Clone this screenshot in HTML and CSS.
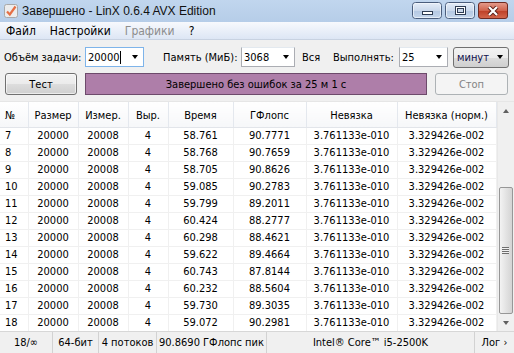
FILE: index.html
```html
<!DOCTYPE html>
<html lang="ru">
<head>
    <meta charset="UTF-8">
    <title>LinX</title>
    <link rel="stylesheet" href="styles.css">
</head>
<body>
<div id="window">
    <div class="titlebar">
        <svg class="app-icon" width="16" height="16" viewBox="0 0 16 16">
            <rect x="1.5" y="1.5" width="13" height="13" rx="2" fill="#ececec" stroke="#a9a9a9"/>
            <path d="M4 8.5 L6.8 11.5 L12.5 3.5" fill="none" stroke="#e56f45" stroke-width="2.2"/>
        </svg>
        <span class="title">Завершено - LinX 0.6.4 AVX Edition</span>
        <div class="caption-btns">
            <svg width="30" height="17" viewBox="0 0 30 17">
                <defs>
                    <linearGradient id="gBlue" x1="0" y1="0" x2="0" y2="1">
                        <stop offset="0" stop-color="#e6eef8"/>
                        <stop offset="0.5" stop-color="#cbd9ec"/>
                        <stop offset="0.51" stop-color="#b4c8e2"/>
                        <stop offset="1" stop-color="#c6d7ec"/>
                    </linearGradient>
                </defs>
                <rect x="0.5" y="0.5" width="29" height="16" rx="3" fill="url(#gBlue)" stroke="#4a5d7c"/>
                <rect x="1.5" y="1.5" width="27" height="14" rx="2" fill="none" stroke="#f4f8fc" stroke-opacity="0.7"/>
                <rect x="10.5" y="9.5" width="10" height="3" fill="#fff" stroke="#2e3c52"/>
            </svg>
            <svg width="30" height="17" viewBox="0 0 30 17">
                <rect x="0.5" y="0.5" width="29" height="16" rx="3" fill="url(#gBlue)" stroke="#4a5d7c"/>
                <rect x="1.5" y="1.5" width="27" height="14" rx="2" fill="none" stroke="#f4f8fc" stroke-opacity="0.7"/>
                <rect x="10.5" y="4.5" width="10" height="8" fill="#fff" stroke="#2e3c52"/>
                <rect x="12.5" y="6.5" width="6" height="4" fill="#c8d6e8" stroke="#2e3c52"/>
            </svg>
            <div class="cap-close">
                <svg width="14" height="10" viewBox="0 0 14 10">
                    <path d="M3 1 L11 9 M11 1 L3 9" stroke="#5a1f18" stroke-width="4"/>
                    <path d="M3 1 L11 9 M11 1 L3 9" stroke="#fff" stroke-width="2.2"/>
                </svg>
            </div>
        </div>
    </div>

    <div class="menubar">
        <span class="menu-item">Файл</span>
        <span class="menu-item">Настройки</span>
        <span class="menu-item disabled">Графики</span>
        <span class="menu-item">?</span>
    </div>

    <div class="controls">
        <label class="lbl lbl-size">Объём задачи:</label>
        <div class="combo combo-size focused"><span class="val">20000<span class="caret"></span></span><span class="arrow"></span></div>
        <label class="lbl lbl-mem">Память (МиБ):</label>
        <div class="combo combo-mem"><span class="val">3068</span><span class="arrow"></span></div>
        <label class="lbl lbl-all">Вся</label>
        <label class="lbl lbl-run">Выполнять:</label>
        <div class="combo combo-run"><span class="val">25</span><span class="arrow"></span></div>
        <div class="dropbtn"><span class="val">минут</span><span class="arrow"></span></div>
    </div>

    <div class="actions">
        <div class="btn btn-test">Тест</div>
        <div class="progress">Завершено без ошибок за 25 м 1 с</div>
        <div class="btn btn-stop disabled">Стоп</div>
    </div>

    <div class="list">
        <table class="grid">
            <thead>
                <tr>
                    <th class="c-num">№</th>
                    <th class="c-size">Размер</th>
                    <th class="c-dim">Измер.</th>
                    <th class="c-align">Выр.</th>
                    <th class="c-time">Время</th>
                    <th class="c-gf">ГФлопс</th>
                    <th class="c-res">Невязка</th>
                    <th class="c-norm">Невязка (норм.)</th>
                </tr>
            </thead>
            <tbody id="rows"></tbody>
        </table>
        <div class="vscroll">
            <div class="sb-arrow"><span class="tri-up"></span></div>
            <div class="sb-track">
                <div class="sb-thumb"><span class="grip"></span></div>
            </div>
            <div class="sb-arrow"><span class="tri-down"></span></div>
        </div>
    </div>

    <div class="statusbar">
        <span class="sb-cell s1">18/∞</span>
        <span class="sb-cell s2">64-бит</span>
        <span class="sb-cell s3">4 потоков</span>
        <span class="sb-cell s4">90.8690 ГФлопс пик</span>
        <span class="sb-cell s5">Intel® Core™ i5-2500K</span>
        <span class="sb-cell s6">Лог ›</span>
    </div>
</div>

<script>
    var results = [
        [7, "58.761", "90.7771"],
        [8, "58.768", "90.7659"],
        [9, "58.705", "90.8626"],
        [10, "59.085", "90.2783"],
        [11, "59.799", "89.2011"],
        [12, "60.424", "88.2777"],
        [13, "60.298", "88.4621"],
        [14, "59.622", "89.4664"],
        [15, "60.743", "87.8144"],
        [16, "60.232", "88.5604"],
        [17, "59.730", "89.3035"],
        [18, "59.072", "90.2981"]
    ];
    var tbody = document.getElementById("rows");
    results.forEach(function (r) {
        var tr = document.createElement("tr");
        tr.innerHTML =
            '<td class="c-num">' + r[0] + '</td>' +
            '<td>20000</td><td>20008</td><td>4</td>' +
            '<td>' + r[1] + '</td><td>' + r[2] + '</td>' +
            '<td>3.761133e-010</td><td>3.329426e-002</td>';
        tbody.appendChild(tr);
    });
</script>
</body>
</html>
```

FILE: styles.css
```css
*{
    margin: 0;
    padding: 0;
    box-sizing: border-box;
}
body{
    width: 514px;
    height: 353px;
    overflow: hidden;
    background: #f0f0f0;
    font-family: "DejaVu Sans Condensed", "DejaVu Sans", sans-serif;
    font-stretch: condensed;
    font-size: 11px;
    color: #000;
}
#window{
    width: 514px;
    height: 353px;
    display: flex;
    flex-direction: column;
    background: #f0f0f0;
}

/* title bar */
.titlebar{
    width: 514px;
    height: 22px;
    flex-shrink: 0;
    display: flex;
    align-items: center;
    background: linear-gradient(#c1d6ee, #b6cde8);
    padding-left: 3px;
}
.app-icon{
    margin-right: 3px;
    flex-shrink: 0;
}
.title{
    flex: 1;
    font-family: "Liberation Sans", sans-serif;
    font-stretch: normal;
    font-size: 12px;
    color: #111;
    white-space: nowrap;
}
.caption-btns{
    width: 99px;
    height: 17px;
    margin-right: 3px;
    align-self: flex-start;
    margin-top: 2px;
    flex-shrink: 0;
    display: flex;
    gap: 3px;
}
.caption-btns svg{
    display: block;
    flex-shrink: 0;
}
.cap-close{
    width: 30px;
    height: 17px;
    flex-shrink: 0;
    border: 1px solid #6e2a22;
    border-radius: 3px;
    background-color: #c9503a;
    background-image: linear-gradient(#e3998a, #d0634d 50%, #bd3e26 51%, #d2654b);
    display: flex;
    align-items: center;
    justify-content: center;
}

/* menu */
.menubar{
    height: 18px;
    flex-shrink: 0;
    display: flex;
    align-items: center;
    background: linear-gradient(#f7f9fd, #dde6f4);
    border-bottom: 1px solid #c8d2e1;
    font-size: 12px;
    padding-left: 6px;
}
.menu-item{
    margin-right: 14px;
}
.menu-item.disabled{
    color: #8d8d8d;
}

/* controls */
.controls{
    display: flex;
    align-items: center;
    height: 20px;
    flex-shrink: 0;
    margin-top: 7px;
    padding-left: 4px;
}
.lbl{
    white-space: nowrap;
}
.combo{
    height: 20px;
    background: #fff;
    border: 1px solid #abadb3;
    border-top-color: #e3e9ef;
    display: flex;
    align-items: center;
    padding-left: 2px;
}
.combo.focused{
    border-color: #7eb4ea;
}
.combo .val{
    flex: 1;
    display: flex;
    align-items: center;
}
.caret{
    display: inline-block;
    width: 1px;
    height: 13px;
    background: #000;
    margin-left: 1px;
}
.arrow{
    width: 0;
    height: 0;
    border-left: 3.5px solid transparent;
    border-right: 3.5px solid transparent;
    border-top: 4px solid #000;
    margin-right: 5px;
}
.lbl-size{ width: 81px; }
.combo-size{ width: 59px; }
.lbl-mem{ margin-left: 19px; width: 78px; }
.combo-mem{ width: 54px; }
.lbl-all{ margin-left: 7px; width: 31px; }
.lbl-run{ width: 66px; }
.combo-run{ width: 49px; }
.dropbtn{
    margin-left: 5px;
    width: 56px;
    height: 21px;
    border: 1px solid #707070;
    border-radius: 3px;
    background: linear-gradient(#f2f2f2 0%, #ebebeb 50%, #dddddd 51%, #cfcfcf 100%);
    display: flex;
    align-items: center;
    padding-left: 3px;
    color: #10104a;
}
.dropbtn .val{
    flex: 1;
}

/* buttons and progress */
.actions{
    display: flex;
    align-items: center;
    height: 22px;
    flex-shrink: 0;
    margin-top: 6px;
    padding-left: 5px;
}
.btn{
    height: 22px;
    border: 1px solid #707070;
    border-radius: 3px;
    background: linear-gradient(#f2f2f2 0%, #ebebeb 50%, #dddddd 51%, #cfcfcf 100%);
    display: flex;
    align-items: center;
    justify-content: center;
    box-shadow: inset 0 0 0 1px rgba(255,255,255,0.6);
}
.btn-test{ width: 72px; }
.btn.disabled{
    border-color: #adb2b5;
    background: #f4f4f4;
    color: #838383;
    box-shadow: none;
}
.btn-stop{ width: 73px; margin-left: 8px; }
.progress{
    margin-left: 8px;
    width: 342px;
    height: 22px;
    background: #ae7ea9;
    border: 1px solid #6d4a6b;
    display: flex;
    align-items: center;
    justify-content: center;
}

/* list view */
.list{
    margin-top: 6px;
    display: flex;
    height: 230px;
    flex-shrink: 0;
    background: #fff;
    border-top: 1px solid #e6e6e6;
}
.grid{
    width: 496px;
    border-collapse: collapse;
    table-layout: fixed;
    background: #fff;
}
.grid th{
    height: 25px;
    font-weight: normal;
    background: linear-gradient(#ffffff, #f6f7f9);
    border-right: 1px solid #e4e8ee;
    border-bottom: 1px solid #e2e5ea;
    text-align: center;
    padding-top: 2px;
}
.grid td{
    height: 17px;
    text-align: center;
    border-right: 1px solid #f0f0f0;
    border-bottom: 1px solid #f0f0f0;
    padding: 0;
    white-space: nowrap;
}
.grid .c-num{
    text-align: left;
    padding-left: 5px;
}
.c-num{ width: 28px; }
.c-size{ width: 50px; }
.c-dim{ width: 50px; }
.c-align{ width: 40px; }
.c-time{ width: 65px; }
.c-gf{ width: 73px; }
.c-res{ width: 91px; }
.c-norm{ width: 99px; }

/* scrollbar */
.vscroll{
    width: 17px;
    display: flex;
    flex-direction: column;
    background: #f0f0f0;
    border-left: 1px solid #e8e8e8;
}
.sb-arrow{
    height: 17px;
    display: flex;
    align-items: center;
    justify-content: center;
}
.tri-up{
    border-left: 3.5px solid transparent;
    border-right: 3.5px solid transparent;
    border-bottom: 4px solid #606060;
}
.tri-down{
    border-left: 3.5px solid transparent;
    border-right: 3.5px solid transparent;
    border-top: 4px solid #606060;
}
.sb-track{
    flex: 1;
    display: flex;
    flex-direction: column;
    justify-content: flex-end;
}
.sb-thumb{
    height: 127px;
    margin: 0 1px;
    border: 1px solid #979797;
    border-radius: 2px;
    background: linear-gradient(90deg, #f3f3f3, #e3e3e3 50%, #d4d4d4);
    display: flex;
    align-items: center;
    justify-content: center;
}
.grip{
    width: 7px;
    height: 7px;
    background: repeating-linear-gradient(#6e6e6e 0 1px, #f0f0f0 1px 2px);
}

/* status bar */
.statusbar{
    flex: 1;
    display: flex;
    align-items: center;
    border-top: 1px solid #d7d7d7;
    background: #f0f0f0;
}
.sb-cell{
    height: 100%;
    display: flex;
    align-items: center;
    justify-content: center;
    border-right: 1px solid #d2d2d2;
    white-space: nowrap;
}
.s1{ width: 53px; }
.s2{ width: 46px; }
.s3{ width: 58px; }
.s4{ width: 110px; }
.s5{ width: 208px; }
.s6{ flex: 1; border-right: none; }
```
